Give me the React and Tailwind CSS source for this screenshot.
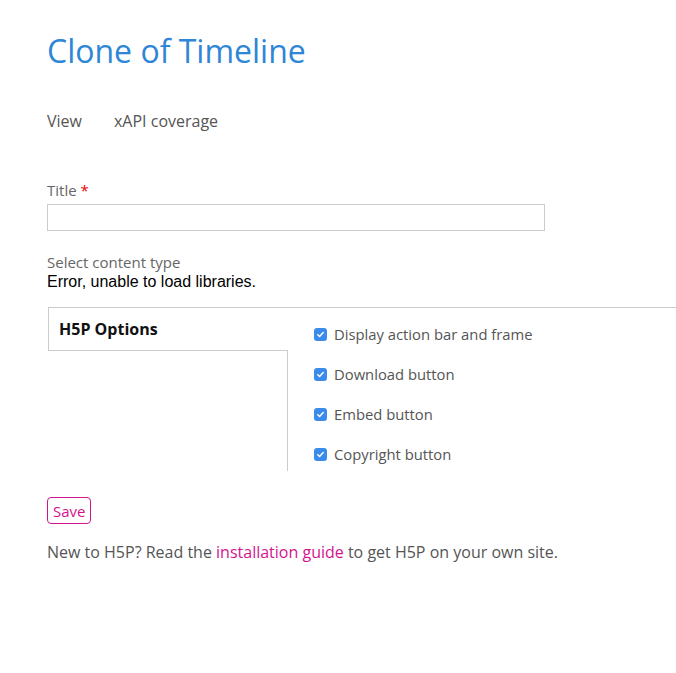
import React from 'react';

const options = [
    'Display action bar and frame',
    'Download button',
    'Embed button',
    'Copyright button',
];

const CheckBox = () => (
    <span className="flex items-center justify-center w-[13px] h-[13px] rounded-[3px] bg-[#3b8beb] shrink-0">
        <svg width="9" height="9" viewBox="0 0 10 10" fill="none">
            <path d="M2 5.2l2 2 4-4.4" stroke="#fff" strokeWidth="1.6" strokeLinecap="round" strokeLinejoin="round" />
        </svg>
    </span>
);

const App = () => {
    return (
        <div className="min-h-[673px] bg-white font-['Open_Sans',sans-serif] text-[#555]">
            <div className="pl-[47px] pt-[28px]">
                <h1 className="text-[32px] leading-[46px] text-[#2e86d6]">Clone of Timeline</h1>

                <div className="flex gap-[32px] mt-[36px] text-[16px] leading-[22px] text-[#555]">
                    <span>View</span>
                    <span>xAPI coverage</span>
                </div>

                <div className="mt-[48px]">
                    <label className="block text-[15px] leading-[20px] text-[#666]">
                        Title <span className="text-[#e00]">*</span>
                    </label>
                    <input type="text" className="block mt-[4px] w-[498px] h-[27px] border border-[#ccc] outline-none" />
                </div>

                <div className="mt-[21px]">
                    <div className="text-[15px] leading-[20px] text-[#666]">Select content type</div>
                    <div className="font-['Liberation_Sans',sans-serif] text-[16px] leading-[20px] text-black">
                        Error, unable to load libraries.
                    </div>
                </div>

                <div className="mt-[15px] flex border-t border-[#ccc] ml-px">
                    <div className="flex flex-col w-[240px]">
                        <div className="h-[43px] border-l border-b border-[#ccc] bg-white flex items-center pl-[10px] font-bold text-[16px] text-[#111]">
                            H5P Options
                        </div>
                        <div className="h-[120px] border-r border-[#ccc]"></div>
                    </div>
                    <div className="flex flex-col pl-[26px] pt-[15px] gap-[18px]">
                        {options.map(opt => (
                            <label key={opt} className="flex items-center gap-[7px] text-[14.8px] leading-[22px] text-[#555]">
                                <CheckBox />
                                {opt}
                            </label>
                        ))}
                    </div>
                </div>

                <button className="mt-[26px] px-[5px] h-[27px] border border-[#d4148f] rounded-[4px] text-[#d4148f] text-[15px] leading-[20px]">
                    Save
                </button>

                <p className="mt-[17px] text-[16px] leading-[22px] text-[#555]">
                    New to H5P? Read the <a className="text-[#d4148f]">installation guide</a> to get H5P on your own site.
                </p>
            </div>
        </div>
    );
};

export default App;
